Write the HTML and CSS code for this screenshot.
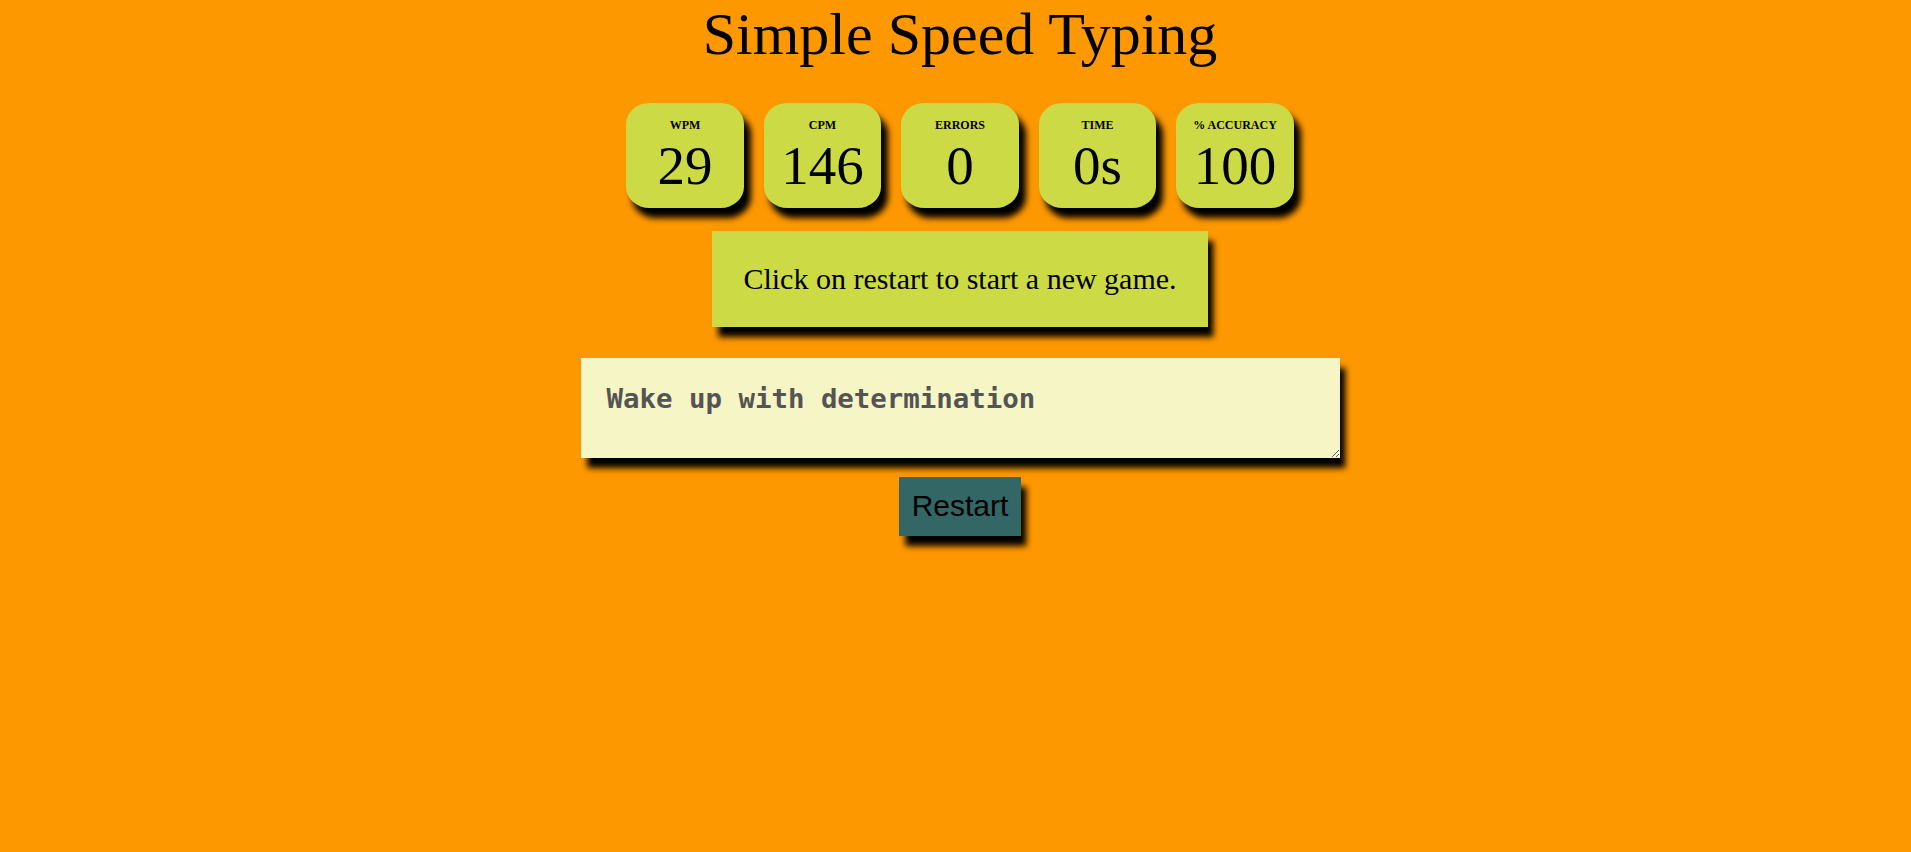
FILE: index.html
```html
<!DOCTYPE html>
<html lang="en">
<head>
<meta charset="utf-8">
<title>Simple Speed Typing</title>
<link rel="stylesheet" href="styles.css">
</head>
<body>
<div class="container">
  <div class="heading">Simple Speed Typing</div>
  <div class="header">
    <div class="stat">
      <div class="header_text">WPM</div>
      <div class="stat_value">29</div>
    </div>
    <div class="stat">
      <div class="header_text">CPM</div>
      <div class="stat_value">146</div>
    </div>
    <div class="stat">
      <div class="header_text">Errors</div>
      <div class="stat_value">0</div>
    </div>
    <div class="stat">
      <div class="header_text">Time</div>
      <div class="stat_value">0s</div>
    </div>
    <div class="stat">
      <div class="header_text">% Accuracy</div>
      <div class="stat_value">100</div>
    </div>
  </div>
  <div class="quote">Click on restart to start a new game.</div>
  <textarea class="input_area" readonly>Wake up with determination</textarea>
  <button class="restart_btn">Restart</button>
</div>
</body>
</html>
```

FILE: styles.css
```css
html, body {
  background-color: #fe9801;
}
body {
  margin: 0 0 0 9px;
  color: black;
  text-align: center;
  font-family: "Liberation Serif", "Times New Roman", serif;
}
.container {
  display: flex;
  flex-direction: column;
  align-items: center;
  padding-bottom: 40px;
}
.heading {
  margin-bottom: 25px;
  font-size: 60px;
  line-height: 68px;
  color: black;
}
.header {
  display: flex;
  align-items: center;
}
.stat {
  background-color: #ccda46;
  width: 87.5px;
  height: 75px;
  margin: 10px;
  padding: 15px;
  border-radius: 20%;
  box-shadow: black 6.25px 10px 6.25px;
}
.header_text {
  text-transform: uppercase;
  font-size: 12px;
  font-weight: 700;
  line-height: 14px;
}
.stat_value {
  font-size: 55px;
  line-height: 63px;
  margin-top: 2px;
}
.quote {
  background-color: #ccda46;
  font-size: 30px;
  line-height: 34px;
  margin: 12.5px;
  padding: 31px;
  box-shadow: black 6.25px 10px 6.25px;
}
.input_area {
  box-sizing: border-box;
  background-color: #f5f5c6;
  color: #545454;
  width: 759px;
  height: 100px;
  font-family: "DejaVu Sans Mono", "Liberation Mono", monospace;
  font-size: 27.4px;
  font-weight: 700;
  margin: 18.75px;
  padding: 25px 26px;
  border: 0;
  outline: none;
  box-shadow: black 6.25px 10px 6.25px;
}
.restart_btn {
  background-color: #326765;
  color: black;
  font-family: "Liberation Sans", Arial, sans-serif;
  font-size: 30px;
  line-height: 34.5px;
  padding: 12.5px;
  border: 0;
  box-shadow: black 6.25px 10px 6.25px;
}
```
